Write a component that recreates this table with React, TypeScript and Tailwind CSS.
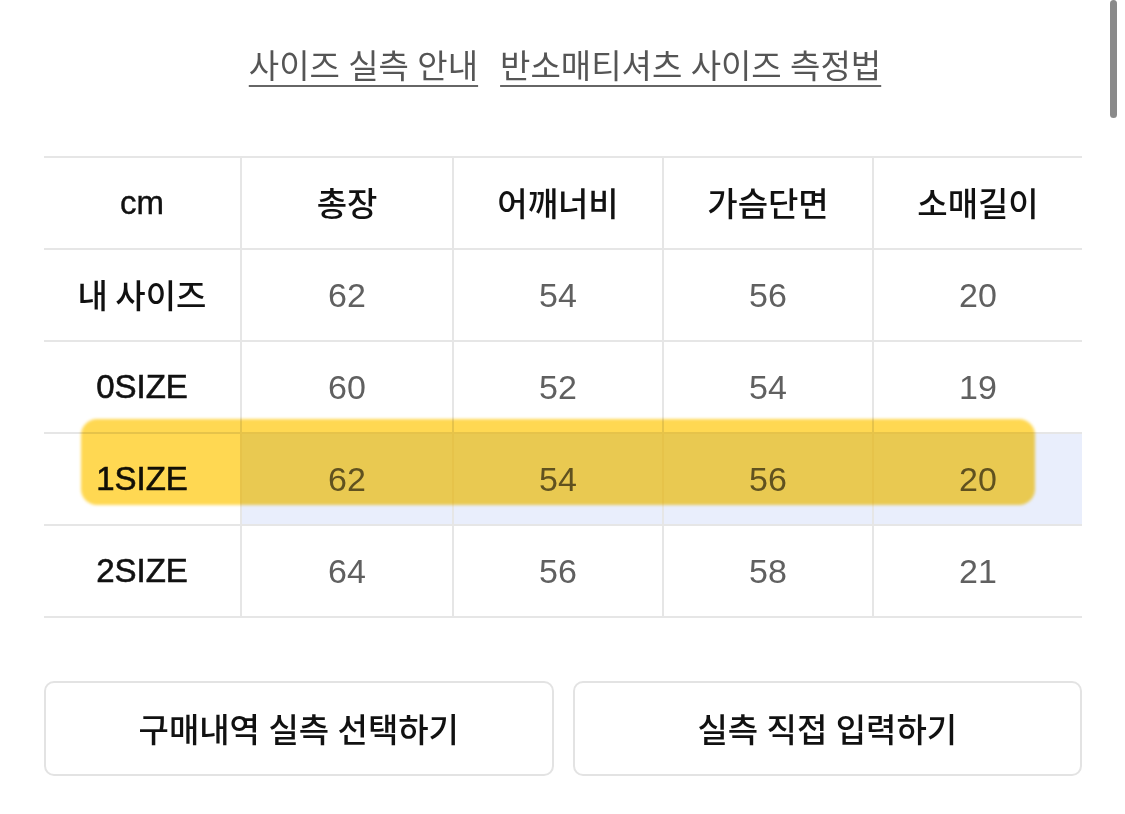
import React from "react";

const headers = ["총장", "어깨너비", "가슴단면", "소매길이"];
const rows: { label: string; values: string[]; korean?: boolean; active?: boolean }[] = [
  { label: "내 사이즈", values: ["62", "54", "56", "20"], korean: true },
  { label: "0SIZE", values: ["60", "52", "54", "19"] },
  { label: "1SIZE", values: ["62", "54", "56", "20"], active: true },
  { label: "2SIZE", values: ["64", "56", "58", "21"] },
];

const ko = { fontFamily: '"Noto Sans CJK KR", "Noto Sans", sans-serif' };
const lat = { fontFamily: '"Liberation Sans", "Noto Sans CJK KR", sans-serif' };

export default function App() {
  return (
    <div className="relative w-[1125px] h-[814px] bg-white overflow-hidden">
      {/* scrollbar */}
      <div className="absolute right-[8px] top-0 w-[7px] h-[118px] rounded-full bg-[#8a8a8a]" />

      <div className="pl-[44px] pr-[43px] pt-[41px]">
        {/* links */}
        <div
          className="flex justify-center gap-[22px] text-[33px] leading-[46px] text-[#555] [word-spacing:1px]"
          style={ko}
        >
          <span className="underline decoration-2 decoration-[#666] underline-offset-[7px] pl-[4px]">사이즈 실측 안내</span>
          <span className="underline decoration-2 decoration-[#666] underline-offset-[7px]">반소매티셔츠 사이즈 측정법</span>
        </div>

        {/* table */}
        <div className="relative mt-[69px] border-t-2 border-[#e6e6e6]">
          <div className="grid grid-cols-[196px_212px_210px_210px_210px] h-[92px] border-b-2 border-[#e6e6e6]">
            <div
              className="flex items-center justify-center text-[33px] text-[#111] [-webkit-text-stroke:0.4px_#111]"
              style={lat}
            >
              cm
            </div>
            {headers.map((h) => (
              <div
                key={h}
                className="flex items-center justify-center border-l-2 border-[#e6e6e6] text-[33px] font-medium text-[#111]"
                style={ko}
              >
                {h}
              </div>
            ))}
          </div>
          {rows.map((r) => (
            <div
              key={r.label}
              className="grid grid-cols-[196px_212px_210px_210px_210px] h-[92px] border-b-2 border-[#e6e6e6]"
            >
              <div
                className={
                  r.korean
                    ? "flex items-center justify-center text-[33px] font-medium text-[#111]"
                    : "flex items-center justify-center text-[33px] text-[#111] [-webkit-text-stroke:0.6px_#111]"
                }
                style={r.korean ? ko : lat}
              >
                {r.label}
              </div>
              {r.values.map((v, i) => (
                <div
                  key={i}
                  className={
                    (r.active ? "bg-[#e9eefc] " : "") +
                    "flex items-center justify-center border-l-2 border-[#e6e6e6] text-[34px] text-[#606060]"
                  }
                  style={lat}
                >
                  {v}
                </div>
              ))}
            </div>
          ))}

          {/* highlighter mark */}
          <div className="pointer-events-none absolute left-[37px] top-[261px] w-[954px] h-[86px] rounded-[16px] bg-[#ffd852] mix-blend-multiply blur-[1.5px]" />
        </div>

        {/* buttons */}
        <div className="mt-[63px] grid grid-cols-2 gap-[19px]">
          <button
            className="h-[95px] rounded-[10px] border-2 border-[#e3e3e3] bg-white text-[33px] font-medium text-[#111] [word-spacing:1px]"
            style={ko}
          >
            구매내역 실측 선택하기
          </button>
          <button
            className="h-[95px] rounded-[10px] border-2 border-[#e3e3e3] bg-white text-[33px] font-medium text-[#111] [word-spacing:1px]"
            style={ko}
          >
            실측 직접 입력하기
          </button>
        </div>
      </div>
    </div>
  );
}
